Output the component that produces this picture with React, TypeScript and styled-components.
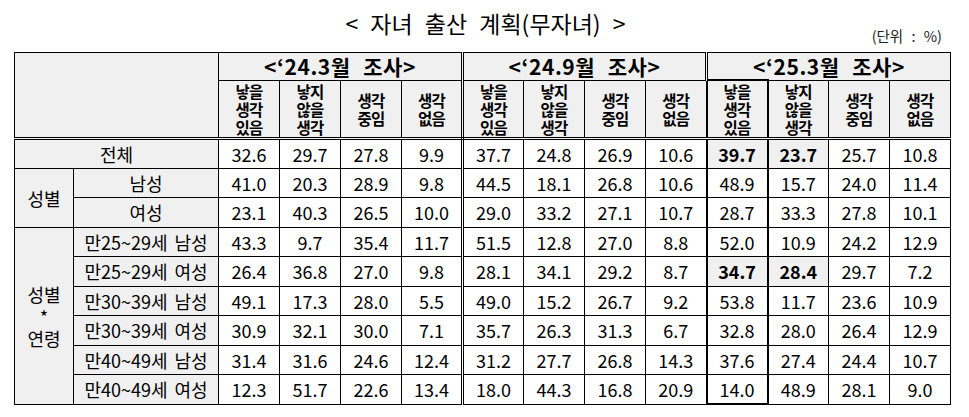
import React from "react";
import styled, { createGlobalStyle, css } from "styled-components";

const GlobalStyle = createGlobalStyle`
  html, body {
    margin: 0;
    padding: 0;
    background: #ffffff;
  }
  body {
    font-family: "Noto Sans CJK KR", "Noto Sans", sans-serif;
    color: #000000;
  }
`;

const SHADE = "#f0f0f0";
const LINE = "1px solid #000";
const DOUBLE = "3px double #000";
const THICK = "2px solid #000";

const Page = styled.div`
  width: 969px;
  padding: 6px 0 0 14px;
  box-sizing: border-box;
`;

// title and unit share one grid cell: title centred, unit pushed to the right edge
const TitleBar = styled.div`
  width: 937px;
  height: 46px;
  display: grid;
  grid-template-areas: "bar";
`;

const Title = styled.h1`
  grid-area: bar;
  justify-self: center;
  align-self: start;
  margin: 4px 0 0 6px;
  font-size: 23px;
  font-weight: 400;
  word-spacing: 7px;
  line-height: 1.2;
  white-space: nowrap;
`;

const Unit = styled.span`
  grid-area: bar;
  justify-self: end;
  align-self: start;
  margin: 21px 9px 0 0;
  font-size: 14.5px;
  line-height: 1.2;
  color: #222;
  word-spacing: 5px;
`;

const Table = styled.table`
  width: 937px;
  table-layout: fixed;
  border-collapse: collapse;
  border: ${LINE};
`;

const Corner = styled.th`
  background: ${SHADE};
  border: ${LINE};
  border-bottom: ${DOUBLE};
`;

const GroupHead = styled.th<{ $left?: boolean; $right?: boolean }>`
  height: 26px;
  padding: 0;
  background: ${SHADE};
  border: ${LINE};
  font-size: 21px;
  font-weight: 700;
  line-height: 1;
  letter-spacing: 0.6px;
  word-spacing: 7px;
  white-space: nowrap;
  ${(p) => p.$right && css`border-right: ${DOUBLE};`}
  ${(p) => p.$left && css`border-left: ${DOUBLE};`}
`;

const SubHead = styled.th<{ $col: number }>`
  height: 56px;
  padding: 0;
  background: ${SHADE};
  border: ${LINE};
  border-bottom: ${DOUBLE};
  font-size: 15.5px;
  font-weight: 700;
  line-height: 18px;
  letter-spacing: -0.8px;
  ${(p) => p.$col === 3 && css`border-right: ${DOUBLE};`}
  ${(p) =>
    p.$col === 8 &&
    css`
      border-left: ${THICK};
      border-right: ${THICK};
      border-top: ${THICK};
    `}
`;

const Row = styled.tr`
  height: 29.5px;
`;

const Label = styled.td<{ $tall?: boolean }>`
  padding: 0;
  background: ${SHADE};
  border: ${LINE};
  text-align: center;
  font-size: 18px;
  line-height: ${(p) => (p.$tall ? "22px" : "1")};
  word-spacing: 3px;
  white-space: nowrap;
`;

const Cell = styled.td<{ $col: number; $mark?: boolean; $last?: boolean }>`
  padding: 0;
  border: ${LINE};
  text-align: center;
  font-size: 18px;
  line-height: 1;
  ${(p) => p.$col === 3 && css`border-right: ${DOUBLE};`}
  ${(p) =>
    p.$col === 8 &&
    css`
      border-left: ${THICK};
      border-right: ${THICK};
    `}
  ${(p) => p.$col === 8 && p.$last && css`border-bottom: ${THICK};`}
  ${(p) =>
    p.$mark &&
    css`
      background: ${SHADE};
      font-weight: 700;
    `}
`;

type DataRow = {
  group?: { text: string[]; span: number };
  label: string;
  full?: boolean;
  values: string[];
  marked?: number[];
};

const groups = ["<‘24.3월 조사>", "<‘24.9월 조사>", "<‘25.3월 조사>"];
const subLabels = [
  ["낳을", "생각", "있음"],
  ["낳지", "않을", "생각"],
  ["생각", "중임"],
  ["생각", "없음"],
];

const rows: DataRow[] = [
  {
    label: "전체",
    full: true,
    values: "32.6 29.7 27.8 9.9 37.7 24.8 26.9 10.6 39.7 23.7 25.7 10.8".split(" "),
    marked: [8, 9],
  },
  {
    group: { text: ["성별"], span: 2 },
    label: "남성",
    values: "41.0 20.3 28.9 9.8 44.5 18.1 26.8 10.6 48.9 15.7 24.0 11.4".split(" "),
  },
  {
    label: "여성",
    values: "23.1 40.3 26.5 10.0 29.0 33.2 27.1 10.7 28.7 33.3 27.8 10.1".split(" "),
  },
  {
    group: { text: ["성별", "*", "연령"], span: 6 },
    label: "만25~29세 남성",
    values: "43.3 9.7 35.4 11.7 51.5 12.8 27.0 8.8 52.0 10.9 24.2 12.9".split(" "),
  },
  {
    label: "만25~29세 여성",
    values: "26.4 36.8 27.0 9.8 28.1 34.1 29.2 8.7 34.7 28.4 29.7 7.2".split(" "),
    marked: [8, 9],
  },
  {
    label: "만30~39세 남성",
    values: "49.1 17.3 28.0 5.5 49.0 15.2 26.7 9.2 53.8 11.7 23.6 10.9".split(" "),
  },
  {
    label: "만30~39세 여성",
    values: "30.9 32.1 30.0 7.1 35.7 26.3 31.3 6.7 32.8 28.0 26.4 12.9".split(" "),
  },
  {
    label: "만40~49세 남성",
    values: "31.4 31.6 24.6 12.4 31.2 27.7 26.8 14.3 37.6 27.4 24.4 10.7".split(" "),
  },
  {
    label: "만40~49세 여성",
    values: "12.3 51.7 22.6 13.4 18.0 44.3 16.8 20.9 14.0 48.9 28.1 9.0".split(" "),
  },
];

function Lines({ parts }: { parts: string[] }) {
  return (
    <>
      {parts.map((t, i) => (
        <React.Fragment key={i}>
          {i > 0 && <br />}
          {t}
        </React.Fragment>
      ))}
    </>
  );
}

export default function App() {
  return (
    <Page>
      <GlobalStyle />
      <TitleBar>
        <Title>&lt; 자녀 출산 계획(무자녀) &gt;</Title>
        <Unit>(단위 : %)</Unit>
      </TitleBar>
      <Table>
        <colgroup>
          <col style={{ width: 59 }} />
          <col style={{ width: 145 }} />
          {Array.from({ length: 12 }, (_, i) => (
            <col key={i} style={{ width: 61 }} />
          ))}
        </colgroup>
        <thead>
          <tr>
            <Corner rowSpan={2} colSpan={2} />
            {groups.map((g, i) => (
              <GroupHead key={g} colSpan={4} $right={i === 0} $left={i === 2}>
                {g}
              </GroupHead>
            ))}
          </tr>
          <tr>
            {groups.flatMap((g, gi) =>
              subLabels.map((s, si) => (
                <SubHead key={`${g}-${si}`} $col={gi * 4 + si}>
                  <Lines parts={s} />
                </SubHead>
              ))
            )}
          </tr>
        </thead>
        <tbody>
          {rows.map((r, ri) => (
            <Row key={r.label}>
              {r.group && (
                <Label rowSpan={r.group.span} $tall>
                  <Lines parts={r.group.text} />
                </Label>
              )}
              <Label colSpan={r.full ? 2 : 1}>{r.label}</Label>
              {r.values.map((v, ci) => (
                <Cell
                  key={ci}
                  $col={ci}
                  $mark={r.marked?.includes(ci)}
                  $last={ri === rows.length - 1}
                >
                  {v}
                </Cell>
              ))}
            </Row>
          ))}
        </tbody>
      </Table>
    </Page>
  );
}
